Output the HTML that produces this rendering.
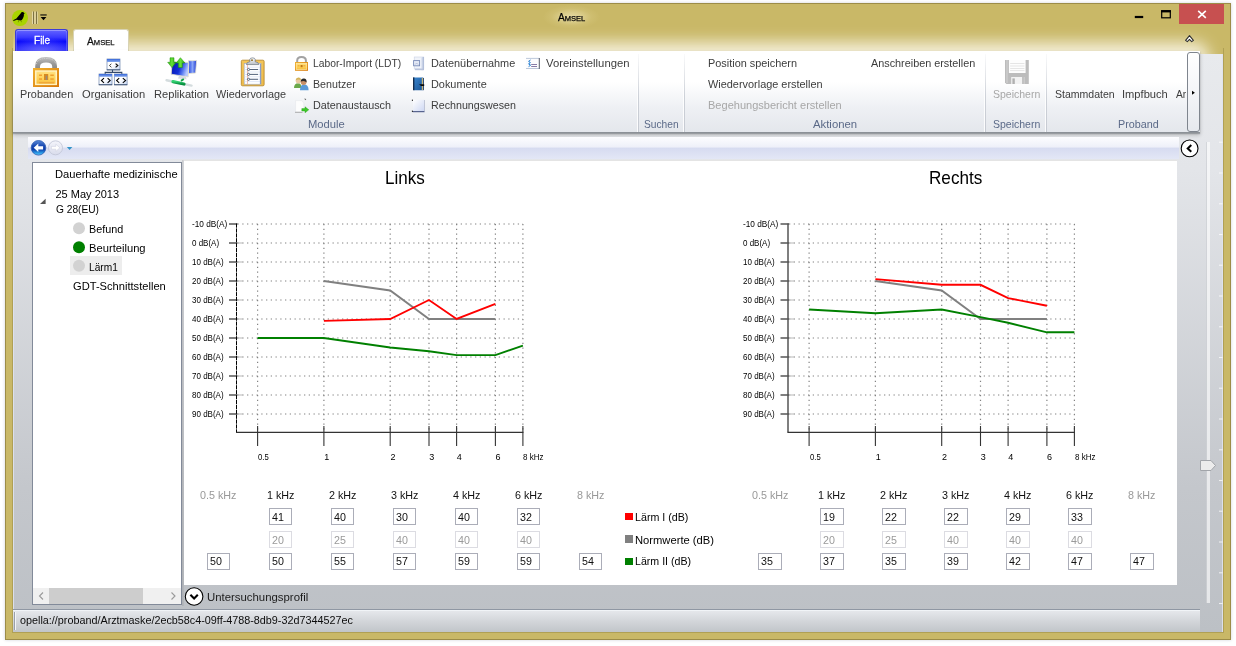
<!DOCTYPE html>
<html lang="de"><head><meta charset="utf-8"><title>Amsel</title>
<style>
html,body{margin:0;padding:0;}
body{width:1236px;height:646px;background:#fff;position:relative;overflow:hidden;font-family:"Liberation Sans",sans-serif;}
div,span,svg{position:absolute;box-sizing:border-box;}
.t{white-space:nowrap;line-height:16px;height:16px;transform-origin:0 50%;}
#win{left:5px;top:3px;width:1226px;height:637px;background:#c9b867;border:1px solid #9c8c48;box-shadow:0 0 3px rgba(40,50,90,.22);}
#glowc{left:13px;top:4px;width:1210px;height:50px;overflow:hidden;}
#glow{left:10px;top:47px;width:1177px;height:60px;border-radius:0 6px 0 0;background:#f5f1de;box-shadow:0 0 15px 9px rgba(245,240,218,.98);}
#client{left:13px;top:54px;width:1210px;height:578px;box-shadow:inset 1px 0 0 rgba(222,226,238,.9),inset -1px 0 0 rgba(222,226,238,.9);background:linear-gradient(to bottom,#e8eaed 0%,#e3e5e9 20%,#c4c7cc 75%,#bcc0c5 100%);}
#ribbon{left:13px;top:51px;width:1187px;height:82px;background:linear-gradient(to bottom,#ffffff 0%,#ffffff 38%,#eef0f4 70%,#e4e7ec 100%);border-bottom:1px solid #8c9197;box-shadow:0 1px 1px rgba(120,125,132,.55),0 2px 4px rgba(0,0,0,.22);}
.sep{width:1px;top:54px;height:78px;background:linear-gradient(to bottom,rgba(200,204,212,.1),#cdd1d8 55%,#c6cad2);box-shadow:-1px 0 0 rgba(255,255,255,.85);}
#nav{left:28px;top:137px;width:1151px;height:22px;background:linear-gradient(to bottom,#fdfdff 0%,#eef0f9 46%,#d6dbf0 50%,#e3e7f6 100%);}
#tree{left:32px;top:162px;width:150px;height:443px;background:#fff;border:1px solid #828a99;}
#content{left:184px;top:160px;width:992.5px;height:425px;background:#fff;}
#status{left:13px;top:609px;width:1187px;height:23px;background:linear-gradient(to bottom,#e7e9ed 0%,#d3d6da 50%,#c1c5c9 100%);border-top:1px solid #8f97a3;box-shadow:inset 0 1px 0 #f1f4f7;}
.box{width:23px;height:17px;border:1px solid #abadb8;background:#fff;}
.box.d{border-color:#dcdce2;}
#txt{left:0;top:0;width:1236px;height:646px;will-change:transform;}
#inb{left:12px;top:48px;width:1212px;height:585px;border:1px solid #b0a054;border-top:none;}

</style></head>
<body>
<div id="win"></div>
<div id="glowc"><div id="glow"></div></div>
<div id="inb"></div>
<div id="client"></div>
<div style="left:543px;top:5px;width:57px;height:24px;background:radial-gradient(ellipse 50% 50% at 50% 50%,rgba(236,226,176,.8) 0%,rgba(232,221,166,.6) 35%,rgba(222,208,140,.25) 70%,rgba(201,184,103,0) 100%);"></div>
<!-- window buttons -->
<div id="close" style="left:1179px;top:4px;width:45px;height:20px;background:#c75050;"></div>
<svg style="left:1128px;top:4px" width="100" height="20" viewBox="0 0 100 20">
 <rect x="6.800" y="11.900" width="8.400" height="2.200" fill="#000"/>
 <rect x="33.7" y="6.8" width="8.6" height="7" fill="none" stroke="#000" stroke-width="1.2"/><rect x="33.1" y="6.2" width="9.8" height="2.2" fill="#000"/>
 <path d="M70.2 6.8 L77.8 13.8 M77.8 6.8 L70.2 13.8" stroke="#fff" stroke-width="1.650" fill="none"/>
</svg>
<!-- quick access -->
<svg id="appicon" style="left:10px;top:8px" width="40" height="20" viewBox="0 0 40 20">
 <circle cx="10" cy="10" r="8" fill="#a9d400"/>
 <path d="M3.100 12.300 L6.400 10.400 L10.600 5.400 Q11.400 4 12.600 4.100 Q13.800 4.300 14 5.100 L14.900 5.500 L13.900 6 Q14.200 8.600 13 10.300 Q12 12.400 10.400 12.600 L6.800 11.800 L3.600 12.900 Z" fill="#000"/>
 <path d="M8.600 12.200 L8.300 14.300 M11 12.500 L11.500 14.200" stroke="#4a5a00" stroke-width=".5" fill="none"/>
 <rect x="23" y="3.500" width="1" height="12.500" fill="#7d7240"/><rect x="22.100" y="3.500" width=".9" height="12.500" fill="#e6dcae"/><rect x="24" y="3.500" width="2" height="12.500" fill="#dccf98"/>
 <rect x="26" y="3.500" width="1" height="12.500" fill="#7d7240"/><rect x="27" y="3.500" width=".8" height="12.500" fill="#e0d6a6"/>
 <rect x="30.3" y="6.2" width="6.4" height="1.5" fill="#3a3520"/>
 <path d="M30.6 9 L36.4 9 L33.5 12.2 Z" fill="#000"/>
</svg>
<!-- tabs -->
<div id="filetab" style="left:15px;top:29px;width:53px;height:22px;border-radius:3px 3px 0 0;background:radial-gradient(ellipse 70% 70% at 50% 105%,rgba(110,110,255,.9) 0%,rgba(60,60,255,0) 100%),linear-gradient(to bottom,#6464ff 0%,#3a3aff 35%,#0606fa 56%,#2c2cff 100%);border:1px solid #3c3cd6;border-bottom:none;box-shadow:inset 0 1px 0 rgba(160,160,255,.8),inset 1px 0 0 rgba(120,120,255,.5),inset -1px 0 0 rgba(120,120,255,.5);"></div>
<div id="amseltab" style="left:73px;top:29px;width:55.5px;height:23px;border-radius:3px 3px 0 0;background:#fff;border:1px solid #d8d3b4;border-bottom:none;"></div>
<!-- ribbon -->
<div id="ribbon"></div>
<div style="left:73.5px;top:50px;width:54.5px;height:2px;background:#fff;"></div>
<div class="sep" style="left:638px"></div>
<div class="sep" style="left:684px"></div>
<div class="sep" style="left:985px"></div>
<div class="sep" style="left:1046px"></div>
<!-- ribbon scroll button -->
<div style="left:1187px;top:52px;width:13px;height:80px;border:1px solid #7f858e;border-radius:3px;background:linear-gradient(to bottom,#fff,#f4f5f8 50%,#e6e9ee);"></div>
<svg style="left:1188px;top:86px" width="12" height="12" viewBox="0 0 12 12"><path d="M4 4.700 L6.900 6.700 L4 8.700 Z" fill="#000" stroke="#fff" stroke-width=".5" paint-order="stroke"/></svg>
<!-- ribbon minimise chevron -->
<svg style="left:1183px;top:32px" width="14" height="14" viewBox="0 0 14 14"><path d="M2.600 8.400 L6.500 3.700 L10.400 8.400 L8.700 9.600 L6.500 7.400 L4.300 9.600 Z" fill="#fff" stroke="#2e2e2e" stroke-width="1.100" stroke-linejoin="round"/></svg>
<svg id="icons" style="left:0;top:0" width="1236" height="140" viewBox="0 0 1236 140">
<defs>
 <linearGradient id="lkb" x1="0" y1="0" x2="1" y2="1"><stop offset="0" stop-color="#f0b030"/><stop offset="1" stop-color="#d87808"/></linearGradient>
 <linearGradient id="lkf" x1="0" y1="0" x2="0" y2="1"><stop offset="0" stop-color="#ffe080"/><stop offset=".6" stop-color="#ffd257"/><stop offset="1" stop-color="#f6bc3c"/></linearGradient>
 <linearGradient id="shk" x1="0" y1="0" x2="0" y2="1"><stop offset="0" stop-color="#c2c2c2"/><stop offset=".5" stop-color="#9c9c9c"/><stop offset="1" stop-color="#8a8a8a"/></linearGradient>
 <linearGradient id="obt" x1="0" y1="0" x2="0" y2="1"><stop offset="0" stop-color="#3868d8"/><stop offset="1" stop-color="#86a8ec"/></linearGradient>
 <linearGradient id="obb" x1="0" y1="0" x2="1" y2="1"><stop offset="0" stop-color="#ffffff"/><stop offset=".5" stop-color="#ffffff"/><stop offset="1" stop-color="#c8d8f4"/></linearGradient>
 <linearGradient id="mon" x1="0" y1="0" x2="1" y2=".3"><stop offset="0" stop-color="#0612ac"/><stop offset=".55" stop-color="#1430d8"/><stop offset=".78" stop-color="#5a7cf0"/><stop offset="1" stop-color="#b4c6ff"/></linearGradient>
 <linearGradient id="mon2" x1="0" y1="0" x2="1" y2="0"><stop offset="0" stop-color="#2848e0"/><stop offset=".5" stop-color="#88a4f8"/><stop offset="1" stop-color="#1c38d0"/></linearGradient>
 <linearGradient id="grn" x1="0" y1="0" x2="1" y2="0"><stop offset="0" stop-color="#2cb810"/><stop offset=".5" stop-color="#66e038"/><stop offset="1" stop-color="#22a008"/></linearGradient>
 <linearGradient id="cab" x1="0" y1="0" x2="0" y2="1"><stop offset="0" stop-color="#30d070"/><stop offset="1" stop-color="#089040"/></linearGradient>
 <linearGradient id="brd" x1="0" y1="0" x2="0" y2="1"><stop offset="0" stop-color="#f4c558"/><stop offset="1" stop-color="#eebb48"/></linearGradient>
 <linearGradient id="clp" x1="0" y1="0" x2="0" y2="1"><stop offset="0" stop-color="#ffffff"/><stop offset="1" stop-color="#b8bec6"/></linearGradient>
 <linearGradient id="bk2" x1="0" y1="0" x2="1" y2="1"><stop offset="0" stop-color="#3a86d0"/><stop offset="1" stop-color="#1a5494"/></linearGradient>
 <linearGradient id="pg" x1="0" y1="0" x2="1" y2="1"><stop offset="0" stop-color="#ffffff"/><stop offset="1" stop-color="#ccd6f2"/></linearGradient>
 <linearGradient id="dtu" x1="0" y1="0" x2="1" y2="0"><stop offset="0" stop-color="#e8edf8"/><stop offset="1" stop-color="#a8b6d4"/></linearGradient>
</defs>
<!-- Probanden: big lock -->
<g>
 <path d="M35.2 69 L35.2 66 Q35.2 57 46 57 Q57 57 57 66 L57 69 L52.2 69 L52.2 66.500 Q52.2 62.600 46 62.600 Q40 62.600 40 66.500 L40 69 Z" fill="url(#shk)"/>
 <path d="M36.5 64 Q37.5 58.500 46 58.500 Q54.500 58.500 55.700 64" fill="none" stroke="#d4d4d4" stroke-width="1" stroke-dasharray="1 1"/>
 <rect x="33" y="68" width="26" height="19" fill="url(#lkb)"/>
 <rect x="35" y="70.300" width="22" height="14.800" fill="#fff2c0"/>
 <rect x="36.500" y="71.700" width="19" height="12" fill="url(#lkf)"/>
 <rect x="44" y="74" width="4.200" height="6" fill="#d88a20"/><rect x="45.700" y="75.600" width="1.600" height="4.400" fill="#9a8a78"/>
 <rect x="39" y="74.500" width="3" height="1.500" fill="#efa030"/><rect x="39" y="78.300" width="3" height="1.500" fill="#efa030"/>
 <rect x="50.300" y="74.500" width="3.500" height="1.500" fill="#efa030"/><rect x="50.300" y="78.300" width="3.500" height="1.500" fill="#efa030"/>
 <rect x="39" y="82" width="15" height="1.400" fill="#f0a838"/>
</g>
<!-- Organisation -->
<g>
 <path d="M112.500 69.500 L112.500 72.400 M105.200 74.500 L105.200 72.400 L121.800 72.400 L121.800 74.500" fill="none" stroke="#34496a" stroke-width="1.100"/>
 <g id="obx"><rect x="107" y="59" width="13" height="10.800" fill="url(#obb)" stroke="#6c84ac" stroke-width=".7"/><rect x="107" y="59" width="13" height="3" fill="url(#obt)"/></g>
 <path d="M111.400 63.800 L109.400 65.500 L111.400 67.200" fill="none" stroke="#333" stroke-width=".9"/><path d="M115.600 63.600 L117.800 65.500 L115.600 67.400" fill="none" stroke="#111" stroke-width="1.200"/>
 <rect x="99" y="74" width="13" height="10.700" fill="url(#obb)" stroke="#6c84ac" stroke-width=".7"/><rect x="99" y="74" width="13" height="2.800" fill="url(#obt)"/>
 <rect x="114.300" y="74" width="12.800" height="10.700" fill="url(#obb)" stroke="#6c84ac" stroke-width=".7"/><rect x="114.300" y="74" width="12.800" height="2.800" fill="url(#obt)"/>
 <path d="M104 78.200 L101.400 80.500 L104 82.800 M107.600 78.200 L110.200 80.500 L107.600 82.800 M119.200 78.200 L116.600 80.500 L119.200 82.800 M122.800 78.200 L125.600 80.500 L122.800 82.800" fill="none" stroke="#000" stroke-width="1.050"/>
 <path d="M106.800 69.900 L120.200 69.900 M98.800 84.800 L112.200 84.800 M114.100 84.800 L127.300 84.800" stroke="#34496a" stroke-width=".9"/>
</g>
<!-- Replikation -->
<g>
 <path d="M188.400 60.800 L196.600 60.500 L195.600 73 L188.400 73.600 Z" fill="url(#mon2)" stroke="#e8e4d0" stroke-width=".8"/>
 <path d="M172.200 61.800 L188.800 62.500 L188.200 77 L171.200 74.200 Z" fill="url(#mon)" stroke="#e6e2cc" stroke-width=".8"/>
 <path d="M179 75.800 L186 77 L186.600 79.200 L178 78.600 Z" fill="#c8ccd4" opacity=".7"/>
 <path d="M170 57.800 L174 57.800 L174 62.300 L176.200 62.300 L172 67.600 L167.700 62.300 L170 62.300 Z" fill="url(#grn)" stroke="#1c9008" stroke-width=".5"/>
 <path d="M178.300 67.500 L182.400 67.500 L182.400 63 L185 63 L180.400 57.700 L176.200 63 L178.300 63 Z" fill="url(#grn)" stroke="#1c9008" stroke-width=".5"/>
 <path d="M166.600 80.300 L191.500 85.600" stroke="#d4dcde" stroke-width="2.500" stroke-linecap="round"/>
 <path d="M173 81.600 L184 84" stroke="url(#cab)" stroke-width="3.300" stroke-linecap="round"/>
 <path d="M181 80.800 L183.800 79" stroke="#10a048" stroke-width="2"/>
</g>
<!-- Wiedervorlage: clipboard -->
<g>
 <rect x="241.300" y="60.200" width="22.800" height="25.600" rx="1.200" fill="url(#brd)" stroke="#b88a30" stroke-width=".9"/>
 <rect x="244.200" y="63.400" width="16.800" height="20.800" fill="#fff" stroke="#9aa8c4" stroke-width=".6"/>
 <g stroke="#d4dff4" stroke-width=".7"><line x1="244.500" y1="67.200" x2="260.700" y2="67.200"/><line x1="244.500" y1="69.600" x2="260.700" y2="69.600"/><line x1="244.500" y1="72" x2="260.700" y2="72"/><line x1="244.500" y1="74.400" x2="260.700" y2="74.400"/><line x1="244.500" y1="76.800" x2="260.700" y2="76.800"/><line x1="244.500" y1="79.200" x2="260.700" y2="79.200"/><line x1="244.500" y1="81.600" x2="260.700" y2="81.600"/></g>
 <line x1="247.500" y1="64" x2="247.500" y2="84" stroke="#f0a890" stroke-width=".7"/>
 <line x1="260.400" y1="64" x2="260.400" y2="84" stroke="#5a74b0" stroke-width=".7"/>
 <g stroke="#56657c" stroke-width="1" fill="#fff"><line x1="249.500" y1="69.500" x2="258" y2="69.500"/><line x1="249.500" y1="74.400" x2="258" y2="74.400"/><line x1="249.500" y1="79.300" x2="258" y2="79.300"/><circle cx="248.500" cy="69.500" r="1.100"/><circle cx="248.500" cy="74.400" r="1.100"/><circle cx="248.500" cy="79.300" r="1.100"/></g>
 <path d="M246.400 64.600 Q246.400 62 249.800 61.800 L249.800 59.400 Q250 57.900 252.600 57.900 Q255 57.900 255.200 59.400 L255.200 61.800 Q258.800 62 258.800 64.600 Z" fill="url(#clp)" stroke="#6c747e" stroke-width=".7"/>
 <circle cx="252" cy="60.200" r=".9" fill="#8a6a20"/>
</g>
<!-- small lock -->
<g>
 <path d="M297.200 62.500 L297.200 60.500 Q297.200 57 301.500 57 Q305.900 57 305.900 60.500 L305.900 62.500" fill="none" stroke="#a2a2a2" stroke-width="2"/>
 <rect x="295" y="62" width="13" height="8.800" fill="url(#lkb)"/>
 <rect x="296.200" y="63.300" width="10.600" height="6.200" fill="url(#lkf)" stroke="#fff0b8" stroke-width=".6"/>
 <rect x="300.600" y="65" width="2" height="2.200" fill="#c07818"/><rect x="297.600" y="65.400" width="2" height=".9" fill="#e89828"/><rect x="303.400" y="65.400" width="2" height=".9" fill="#e89828"/>
</g>
<!-- Benutzer -->
<g>
 <path d="M294 88 Q294 83.200 298.200 83.200 Q301.500 83.200 301.500 88 Z" fill="#6aa84a"/>
 <circle cx="298.300" cy="80.800" r="2.600" fill="#e8c8a0"/><path d="M295.600 80.200 Q296 77.400 298.600 77.600 Q301 77.600 301 80 Q298.400 78.800 295.600 80.200Z" fill="#d4b458"/>
 <path d="M300 90.200 Q300 84.600 304.200 84.600 Q308.600 84.600 308.600 90.200 Z" fill="#5a9ad8"/>
 <circle cx="303.600" cy="82" r="2.900" fill="#c89068"/><path d="M300.700 81.600 Q301 78.400 304 78.600 Q306.800 78.800 306.600 82.600 Q304.800 80 300.700 81.600Z" fill="#2a2a2a"/>
</g>
<!-- Datenaustausch -->
<g>
 <path d="M295.600 100.600 L301.600 100.600 L303.800 103 L303.800 112 L295.600 112 Z" fill="#fdfdfd" stroke="#e2e4e8" stroke-width=".5"/>
 <line x1="295" y1="112.300" x2="302.500" y2="112.300" stroke="#a4a4a4" stroke-width=".9"/>
 <path d="M304.300 98.500 L306.300 98.900 L305.200 100.300 Z" fill="#555"/>
 <path d="M301.800 108.600 L305 108.600 L305 106.800 L308.800 109.800 L305 112.800 L305 111 L301.800 111 Z" fill="#3cc828" stroke="#28a018" stroke-width=".4"/>
</g>
<!-- Datenübernahme -->
<g>
 <rect x="414.200" y="57" width="9.600" height="12" fill="#f0f3fa" stroke="#cad2e4" stroke-width=".6"/>
 <rect x="421" y="57" width="3" height="13.200" fill="url(#dtu)"/>
 <rect x="413.600" y="60.600" width="6" height="5.200" fill="#e4e9f6" stroke="#7a8cb8" stroke-width=".9"/>
 <path d="M415 64.600 L416.600 63 L418.200 64.600" fill="none" stroke="#9aa8c8" stroke-width=".6"/>
 <rect x="415" y="68.600" width="8" height="1.600" fill="#bac4dc"/>
</g>
<!-- Dokumente -->
<g>
 <rect x="413" y="77.400" width="10.600" height="12.800" rx=".8" fill="url(#bk2)"/>
 <rect x="413" y="77.400" width="1.400" height="12.800" fill="#142c4c"/>
 <rect x="421.800" y="78" width="1.400" height="12" fill="#c8b478"/>
 <rect x="423.200" y="78" width=".8" height="12.200" fill="#1c3c68"/>
 <path d="M419 84.200 L424.200 84.200 L424.200 86 L421 86 Z" fill="#0a0a0a"/>
</g>
<!-- Rechnungswesen -->
<g>
 <rect x="413" y="99.800" width="11.600" height="11.800" fill="url(#pg)"/>
 <line x1="412.600" y1="111.700" x2="424.600" y2="111.700" stroke="#26346a" stroke-width=".9"/>
 <line x1="424.500" y1="100" x2="424.500" y2="111.600" stroke="#b0b6c8" stroke-width=".7"/>
 <line x1="412.400" y1="99.600" x2="412.400" y2="112" stroke="#111" stroke-width=".9" stroke-dasharray="1.400 9.600"/>
</g>
<!-- Voreinstellungen -->
<g>
 <rect x="526" y="58.600" width="13" height="9.800" fill="#fcfcfd"/>
 <line x1="526" y1="58.400" x2="539.400" y2="58.400" stroke="#b6c2d6" stroke-width=".9"/><line x1="526" y1="68.500" x2="539.400" y2="68.500" stroke="#b6c2d6" stroke-width=".9"/>
 <line x1="539.300" y1="58" x2="539.300" y2="69" stroke="#565c6a" stroke-width="1"/>
 <path d="M530.500 60 L528.600 61.400 L530.400 62.600 L528.600 63.800 L530.600 65.200 L528.600 66.600" fill="none" stroke="#1878d0" stroke-width="1"/>
 <line x1="531.200" y1="64.500" x2="537" y2="64.500" stroke="#7a6c9c" stroke-width=".9"/><line x1="531.200" y1="66.500" x2="537" y2="66.500" stroke="#7a6c9c" stroke-width=".9"/>
</g>
<!-- Speichern floppy (disabled) -->
<g>
 <path d="M1005 60 L1028.800 60 L1028.800 84 L1006.400 84 L1005 82.600 Z" fill="#bcbcbc"/>
 <rect x="1006" y="60" width="2" height="23" fill="#c8c8c8"/>
 <rect x="1008.900" y="60" width="16.700" height="13" fill="#fdfdfd"/>
 <g stroke="#dedede" stroke-width=".8"><line x1="1010.200" y1="63.500" x2="1024.400" y2="63.500"/><line x1="1010.200" y1="66" x2="1024.400" y2="66"/><line x1="1010.200" y1="68.500" x2="1024.400" y2="68.500"/><line x1="1010.200" y1="70.600" x2="1024.400" y2="70.600"/></g>
 <rect x="1011.200" y="77" width="13.600" height="7" fill="#f2f2f2"/>
 <rect x="1012.400" y="78.400" width="2.400" height="5.600" fill="#b0b0b0"/><rect x="1022" y="77" width="2.800" height="7" fill="#c2c2c2"/>
</g>
</svg>

<!-- nav -->
<div id="nav"></div>
<svg style="left:28px;top:137px" width="60" height="24" viewBox="0 0 60 24">
 <defs><linearGradient id="bk" x1="0" y1="0" x2="0" y2="1"><stop offset="0" stop-color="#5a8ad8"/><stop offset=".35" stop-color="#1c4cb4"/><stop offset=".6" stop-color="#0a3aa8"/><stop offset=".85" stop-color="#2a9ce8"/><stop offset="1" stop-color="#58c8f8"/></linearGradient>
 <linearGradient id="fw" x1="0" y1="0" x2="0" y2="1"><stop offset="0" stop-color="#f4f5fb"/><stop offset="1" stop-color="#d9dcec"/></linearGradient></defs>
 <circle cx="10.500" cy="10.800" r="7.300" fill="url(#bk)" stroke="#2858b0" stroke-width=".8"/>
 <path d="M5.700 10.800 L10.300 6.500 L10.300 9.200 L15.100 9.200 L15.100 12.400 L10.300 12.400 L10.300 15.100 Z" fill="#fff"/>
 <circle cx="27.500" cy="10.800" r="7" fill="url(#fw)" stroke="#c3c7d8" stroke-width=".9"/>
 <path d="M31.800 10.800 L27.800 7.100 L27.800 9.400 L23.400 9.400 L23.400 12.200 L27.800 12.200 L27.800 14.500 Z" fill="#fff" stroke="#cfd2e0" stroke-width=".6"/>
 <path d="M38.800 10 L44.400 10 L41.600 13 Z" fill="#2f93c8"/>
</svg>
<!-- collapse button right -->
<svg style="left:1179px;top:138px" width="22" height="22" viewBox="0 0 22 22"><circle cx="10.6" cy="10.4" r="8.4" fill="#fff" stroke="#000" stroke-width="1.1"/><path d="M12.300 7 L8.700 10.400 L12.300 13.800" fill="none" stroke="#000" stroke-width="2"/></svg>
<!-- right slider -->
<div style="left:1206px;top:142px;width:4px;height:461px;background:rgba(255,255,255,.62);border-left:1px solid rgba(150,155,162,.35);"></div>
<svg style="left:1198px;top:140px" width="26" height="470" viewBox="0 0 26 470">
 <g stroke="rgba(255,255,255,.72)" stroke-width="1.1">
 <line x1="21" y1="463.5" x2="24.6" y2="463.5"/><line x1="21" y1="432.8" x2="24.6" y2="432.8"/><line x1="21" y1="402.0" x2="24.6" y2="402.0"/><line x1="21" y1="371.2" x2="24.6" y2="371.2"/><line x1="21" y1="340.5" x2="24.6" y2="340.5"/><line x1="21" y1="309.8" x2="24.6" y2="309.8"/><line x1="21" y1="279.0" x2="24.6" y2="279.0"/><line x1="21" y1="248.2" x2="24.6" y2="248.2"/><line x1="21" y1="217.5" x2="24.6" y2="217.5"/><line x1="21" y1="186.8" x2="24.6" y2="186.8"/><line x1="21" y1="156.0" x2="24.6" y2="156.0"/><line x1="21" y1="125.2" x2="24.6" y2="125.2"/><line x1="21" y1="94.5" x2="24.6" y2="94.5"/><line x1="21" y1="63.8" x2="24.6" y2="63.8"/><line x1="21" y1="33.0" x2="24.6" y2="33.0"/><line x1="21" y1="2.2" x2="24.6" y2="2.2"/>
 </g>
 <path d="M2.5 320.500 L13 320.500 L17.500 325.500 L13 330.500 L2.5 330.500 Z" fill="#ececec" stroke="#a2a5aa" stroke-width="1"/>
</svg>
<!-- tree -->
<div style="left:182px;top:160px;width:2px;height:446px;background:linear-gradient(to right,rgba(120,122,126,.28),rgba(120,122,126,.12));"></div>
<div id="tree"></div>
<div style="left:70px;top:256px;width:52px;height:19px;background:#ededed;"></div>
<svg style="left:32px;top:162px" width="150" height="130" viewBox="0 0 150 130">
 <path d="M13.600 36.800 L13.600 42 L8 42 Z" fill="#555"/>
 <circle cx="47" cy="66.300" r="6" fill="#d2d2d2"/>
 <circle cx="47" cy="85.200" r="6" fill="#008000"/>
 <circle cx="47" cy="103.800" r="6" fill="#d2d2d2"/>
</svg>
<!-- tree scrollbar -->
<div style="left:33px;top:588px;width:148px;height:16px;background:#f0f0f0;"></div>
<div style="left:49px;top:588px;width:94px;height:16px;background:#cdcdcd;"></div>
<svg style="left:33px;top:588px" width="148" height="16" viewBox="0 0 148 16"><path d="M10 4.500 L6.500 8 L10 11.500 M138.500 4.500 L142 8 L138.500 11.500" fill="none" stroke="#9a9a9a" stroke-width="1.100"/></svg>
<!-- content -->
<div id="content"></div>
<div style="left:184px;top:160px;width:992.5px;height:1px;background:#e4e4e4;"></div>
<svg id="charts" style="left:0;top:0" width="1236" height="646" viewBox="0 0 1236 646"><style>.g{stroke:#828282;stroke-width:1.2;stroke-dasharray:1.3 3.45;}</style>
<line x1="237.5" y1="224.0" x2="522.9" y2="224.0" class="g"/>
<line x1="237.5" y1="243.0" x2="522.9" y2="243.0" class="g"/>
<line x1="237.5" y1="262.0" x2="522.9" y2="262.0" class="g"/>
<line x1="237.5" y1="281.0" x2="522.9" y2="281.0" class="g"/>
<line x1="237.5" y1="300.0" x2="522.9" y2="300.0" class="g"/>
<line x1="237.5" y1="319.0" x2="522.9" y2="319.0" class="g"/>
<line x1="237.5" y1="338.0" x2="522.9" y2="338.0" class="g"/>
<line x1="237.5" y1="357.0" x2="522.9" y2="357.0" class="g"/>
<line x1="237.5" y1="376.0" x2="522.9" y2="376.0" class="g"/>
<line x1="237.5" y1="395.0" x2="522.9" y2="395.0" class="g"/>
<line x1="237.5" y1="414.0" x2="522.9" y2="414.0" class="g"/>
<line x1="257.6" y1="224" x2="257.6" y2="432" class="g"/>
<line x1="323.9" y1="224" x2="323.9" y2="432" class="g"/>
<line x1="390.2" y1="224" x2="390.2" y2="432" class="g"/>
<line x1="429.0" y1="224" x2="429.0" y2="432" class="g"/>
<line x1="456.6" y1="224" x2="456.6" y2="432" class="g"/>
<line x1="495.4" y1="224" x2="495.4" y2="432" class="g"/>
<line x1="522.9" y1="224" x2="522.9" y2="432" class="g"/>
<line x1="229.0" y1="224.0" x2="237.5" y2="224.0" stroke="#4a4a4a" stroke-width="1.4"/>
<line x1="229.0" y1="243.0" x2="237.5" y2="243.0" stroke="#4a4a4a" stroke-width="1.4"/>
<line x1="237.5" y1="243.0" x2="243.0" y2="243.0" stroke="#c4c4c4" stroke-width="1.2"/>
<line x1="229.0" y1="262.0" x2="237.5" y2="262.0" stroke="#4a4a4a" stroke-width="1.4"/>
<line x1="237.5" y1="262.0" x2="243.0" y2="262.0" stroke="#c4c4c4" stroke-width="1.2"/>
<line x1="229.0" y1="281.0" x2="237.5" y2="281.0" stroke="#4a4a4a" stroke-width="1.4"/>
<line x1="237.5" y1="281.0" x2="243.0" y2="281.0" stroke="#c4c4c4" stroke-width="1.2"/>
<line x1="229.0" y1="300.0" x2="237.5" y2="300.0" stroke="#4a4a4a" stroke-width="1.4"/>
<line x1="237.5" y1="300.0" x2="243.0" y2="300.0" stroke="#c4c4c4" stroke-width="1.2"/>
<line x1="229.0" y1="319.0" x2="237.5" y2="319.0" stroke="#4a4a4a" stroke-width="1.4"/>
<line x1="237.5" y1="319.0" x2="243.0" y2="319.0" stroke="#c4c4c4" stroke-width="1.2"/>
<line x1="229.0" y1="338.0" x2="237.5" y2="338.0" stroke="#4a4a4a" stroke-width="1.4"/>
<line x1="237.5" y1="338.0" x2="243.0" y2="338.0" stroke="#c4c4c4" stroke-width="1.2"/>
<line x1="229.0" y1="357.0" x2="237.5" y2="357.0" stroke="#4a4a4a" stroke-width="1.4"/>
<line x1="237.5" y1="357.0" x2="243.0" y2="357.0" stroke="#c4c4c4" stroke-width="1.2"/>
<line x1="229.0" y1="376.0" x2="237.5" y2="376.0" stroke="#4a4a4a" stroke-width="1.4"/>
<line x1="237.5" y1="376.0" x2="243.0" y2="376.0" stroke="#c4c4c4" stroke-width="1.2"/>
<line x1="229.0" y1="395.0" x2="237.5" y2="395.0" stroke="#4a4a4a" stroke-width="1.4"/>
<line x1="237.5" y1="395.0" x2="243.0" y2="395.0" stroke="#c4c4c4" stroke-width="1.2"/>
<line x1="229.0" y1="414.0" x2="237.5" y2="414.0" stroke="#4a4a4a" stroke-width="1.4"/>
<line x1="237.5" y1="414.0" x2="243.0" y2="414.0" stroke="#c4c4c4" stroke-width="1.2"/>
<line x1="236.5" y1="223.5" x2="236.5" y2="432.5" stroke="#000" stroke-width="1" stroke-dasharray="4.2 .7"/>
<line x1="236.0" y1="432.3" x2="523.4" y2="432.3" stroke="#333" stroke-width="1.2"/>
<line x1="257.6" y1="426" x2="257.6" y2="446" stroke="#333" stroke-width="1.1"/>
<line x1="323.9" y1="426" x2="323.9" y2="446" stroke="#333" stroke-width="1.1"/>
<line x1="390.2" y1="426" x2="390.2" y2="446" stroke="#333" stroke-width="1.1"/>
<line x1="429.0" y1="426" x2="429.0" y2="446" stroke="#333" stroke-width="1.1"/>
<line x1="456.6" y1="426" x2="456.6" y2="446" stroke="#333" stroke-width="1.1"/>
<line x1="495.4" y1="426" x2="495.4" y2="446" stroke="#333" stroke-width="1.1"/>
<line x1="522.9" y1="426" x2="522.9" y2="446" stroke="#333" stroke-width="1.1"/>
<polyline points="323.9,281.0 390.2,290.5 429.0,319.0 456.6,319.0 495.4,319.0" fill="none" stroke="#808080" stroke-width="1.9" stroke-linejoin="miter"/>
<polyline points="323.9,320.9 390.2,319.0 429.0,300.0 456.6,319.0 495.4,303.8" fill="none" stroke="#ff0000" stroke-width="1.9" stroke-linejoin="miter"/>
<polyline points="257.6,338.0 323.9,338.0 390.2,347.5 429.0,351.3 456.6,355.1 495.4,355.1 522.9,345.6" fill="none" stroke="#008000" stroke-width="1.9" stroke-linejoin="miter"/>
<line x1="789.0" y1="224.0" x2="1074.4" y2="224.0" class="g"/>
<line x1="789.0" y1="243.0" x2="1074.4" y2="243.0" class="g"/>
<line x1="789.0" y1="262.0" x2="1074.4" y2="262.0" class="g"/>
<line x1="789.0" y1="281.0" x2="1074.4" y2="281.0" class="g"/>
<line x1="789.0" y1="300.0" x2="1074.4" y2="300.0" class="g"/>
<line x1="789.0" y1="319.0" x2="1074.4" y2="319.0" class="g"/>
<line x1="789.0" y1="338.0" x2="1074.4" y2="338.0" class="g"/>
<line x1="789.0" y1="357.0" x2="1074.4" y2="357.0" class="g"/>
<line x1="789.0" y1="376.0" x2="1074.4" y2="376.0" class="g"/>
<line x1="789.0" y1="395.0" x2="1074.4" y2="395.0" class="g"/>
<line x1="789.0" y1="414.0" x2="1074.4" y2="414.0" class="g"/>
<line x1="809.1" y1="224" x2="809.1" y2="432" class="g"/>
<line x1="875.4" y1="224" x2="875.4" y2="432" class="g"/>
<line x1="941.7" y1="224" x2="941.7" y2="432" class="g"/>
<line x1="980.5" y1="224" x2="980.5" y2="432" class="g"/>
<line x1="1008.1" y1="224" x2="1008.1" y2="432" class="g"/>
<line x1="1046.9" y1="224" x2="1046.9" y2="432" class="g"/>
<line x1="1074.4" y1="224" x2="1074.4" y2="432" class="g"/>
<line x1="780.5" y1="224.0" x2="789.0" y2="224.0" stroke="#4a4a4a" stroke-width="1.4"/>
<line x1="780.5" y1="243.0" x2="789.0" y2="243.0" stroke="#4a4a4a" stroke-width="1.4"/>
<line x1="789.0" y1="243.0" x2="794.5" y2="243.0" stroke="#c4c4c4" stroke-width="1.2"/>
<line x1="780.5" y1="262.0" x2="789.0" y2="262.0" stroke="#4a4a4a" stroke-width="1.4"/>
<line x1="789.0" y1="262.0" x2="794.5" y2="262.0" stroke="#c4c4c4" stroke-width="1.2"/>
<line x1="780.5" y1="281.0" x2="789.0" y2="281.0" stroke="#4a4a4a" stroke-width="1.4"/>
<line x1="789.0" y1="281.0" x2="794.5" y2="281.0" stroke="#c4c4c4" stroke-width="1.2"/>
<line x1="780.5" y1="300.0" x2="789.0" y2="300.0" stroke="#4a4a4a" stroke-width="1.4"/>
<line x1="789.0" y1="300.0" x2="794.5" y2="300.0" stroke="#c4c4c4" stroke-width="1.2"/>
<line x1="780.5" y1="319.0" x2="789.0" y2="319.0" stroke="#4a4a4a" stroke-width="1.4"/>
<line x1="789.0" y1="319.0" x2="794.5" y2="319.0" stroke="#c4c4c4" stroke-width="1.2"/>
<line x1="780.5" y1="338.0" x2="789.0" y2="338.0" stroke="#4a4a4a" stroke-width="1.4"/>
<line x1="789.0" y1="338.0" x2="794.5" y2="338.0" stroke="#c4c4c4" stroke-width="1.2"/>
<line x1="780.5" y1="357.0" x2="789.0" y2="357.0" stroke="#4a4a4a" stroke-width="1.4"/>
<line x1="789.0" y1="357.0" x2="794.5" y2="357.0" stroke="#c4c4c4" stroke-width="1.2"/>
<line x1="780.5" y1="376.0" x2="789.0" y2="376.0" stroke="#4a4a4a" stroke-width="1.4"/>
<line x1="789.0" y1="376.0" x2="794.5" y2="376.0" stroke="#c4c4c4" stroke-width="1.2"/>
<line x1="780.5" y1="395.0" x2="789.0" y2="395.0" stroke="#4a4a4a" stroke-width="1.4"/>
<line x1="789.0" y1="395.0" x2="794.5" y2="395.0" stroke="#c4c4c4" stroke-width="1.2"/>
<line x1="780.5" y1="414.0" x2="789.0" y2="414.0" stroke="#4a4a4a" stroke-width="1.4"/>
<line x1="789.0" y1="414.0" x2="794.5" y2="414.0" stroke="#c4c4c4" stroke-width="1.2"/>
<line x1="788.0" y1="223.5" x2="788.0" y2="432.5" stroke="#555" stroke-width="1.5"/>
<line x1="787.5" y1="432.3" x2="1074.9" y2="432.3" stroke="#333" stroke-width="1.2"/>
<line x1="809.1" y1="426" x2="809.1" y2="446" stroke="#333" stroke-width="1.1"/>
<line x1="875.4" y1="426" x2="875.4" y2="446" stroke="#333" stroke-width="1.1"/>
<line x1="941.7" y1="426" x2="941.7" y2="446" stroke="#333" stroke-width="1.1"/>
<line x1="980.5" y1="426" x2="980.5" y2="446" stroke="#333" stroke-width="1.1"/>
<line x1="1008.1" y1="426" x2="1008.1" y2="446" stroke="#333" stroke-width="1.1"/>
<line x1="1046.9" y1="426" x2="1046.9" y2="446" stroke="#333" stroke-width="1.1"/>
<line x1="1074.4" y1="426" x2="1074.4" y2="446" stroke="#333" stroke-width="1.1"/>
<polyline points="875.4,281.0 941.7,290.5 980.5,319.0 1008.1,319.0 1046.9,319.0" fill="none" stroke="#808080" stroke-width="1.9" stroke-linejoin="miter"/>
<polyline points="875.4,279.1 941.7,284.8 980.5,284.8 1008.1,298.1 1046.9,305.7" fill="none" stroke="#ff0000" stroke-width="1.9" stroke-linejoin="miter"/>
<polyline points="809.1,309.5 875.4,313.3 941.7,309.5 980.5,317.1 1008.1,322.8 1046.9,332.3 1074.4,332.3" fill="none" stroke="#008000" stroke-width="1.9" stroke-linejoin="miter"/>
</svg>
<div class="box" style="left:269px;top:508px"></div>
<div class="box" style="left:331px;top:508px"></div>
<div class="box" style="left:393px;top:508px"></div>
<div class="box" style="left:455px;top:508px"></div>
<div class="box" style="left:517px;top:508px"></div>
<div class="box d" style="left:269px;top:531px"></div>
<div class="box d" style="left:331px;top:531px"></div>
<div class="box d" style="left:393px;top:531px"></div>
<div class="box d" style="left:455px;top:531px"></div>
<div class="box d" style="left:517px;top:531px"></div>
<div class="box" style="left:207px;top:553px"></div>
<div class="box" style="left:269px;top:553px"></div>
<div class="box" style="left:331px;top:553px"></div>
<div class="box" style="left:393px;top:553px"></div>
<div class="box" style="left:455px;top:553px"></div>
<div class="box" style="left:517px;top:553px"></div>
<div class="box" style="left:579px;top:553px"></div>
<div class="box" style="left:820px;top:508px;width:24px"></div>
<div class="box" style="left:882px;top:508px;width:24px"></div>
<div class="box" style="left:944px;top:508px;width:24px"></div>
<div class="box" style="left:1006px;top:508px;width:24px"></div>
<div class="box" style="left:1068px;top:508px;width:24px"></div>
<div class="box d" style="left:820px;top:531px;width:24px"></div>
<div class="box d" style="left:882px;top:531px;width:24px"></div>
<div class="box d" style="left:944px;top:531px;width:24px"></div>
<div class="box d" style="left:1006px;top:531px;width:24px"></div>
<div class="box d" style="left:1068px;top:531px;width:24px"></div>
<div class="box" style="left:758px;top:553px;width:24px"></div>
<div class="box" style="left:820px;top:553px;width:24px"></div>
<div class="box" style="left:882px;top:553px;width:24px"></div>
<div class="box" style="left:944px;top:553px;width:24px"></div>
<div class="box" style="left:1006px;top:553px;width:24px"></div>
<div class="box" style="left:1068px;top:553px;width:24px"></div>
<div class="box" style="left:1130px;top:553px;width:24px"></div>
<!-- legend squares -->
<div style="left:625px;top:513px;width:8px;height:7px;background:#ff0000;"></div>
<div style="left:625px;top:535px;width:8px;height:8px;background:#808080;"></div>
<div style="left:625px;top:558px;width:8px;height:7px;background:#008000;"></div>
<!-- expander -->
<svg style="left:184.400px;top:585.600px" width="22" height="22" viewBox="0 0 22 22"><circle cx="10.1" cy="10.5" r="8.8" fill="#fff" stroke="#000" stroke-width="1.1"/><path d="M6.400 8.700 L10.100 12.500 L13.800 8.700" fill="none" stroke="#000" stroke-width="2.100"/></svg>
<!-- status -->
<div id="status"></div>
<div style="left:14px;top:612px;width:1px;height:18px;background:#9aa0a8;"></div><div style="left:15px;top:612px;width:1px;height:18px;background:#f4f5f7;"></div>

<div id="txt">
<span class="t" style="left:557.90px;top:9.06px;font-size:10.8px;color:#000;transform:scaleX(0.9414);font-variant:small-caps;-webkit-text-stroke:.25px #000;">Amsel</span>
<span class="t" style="left:33.50px;top:32.39px;font-size:11px;color:#fff;transform:scaleX(0.9135);-webkit-text-stroke:.3px #fff;">File</span>
<span class="t" style="left:87.00px;top:32.96px;font-size:10.8px;color:#111;transform:scaleX(0.9483);font-variant:small-caps;-webkit-text-stroke:.25px #111;">Amsel</span>
<span class="t" style="left:20.40px;top:85.89px;font-size:11px;color:#3c3c3c;transform:scaleX(0.9883);">Probanden</span>
<span class="t" style="left:81.80px;top:85.89px;font-size:11px;color:#3c3c3c;transform:scaleX(1.0132);">Organisation</span>
<span class="t" style="left:153.60px;top:85.89px;font-size:11px;color:#3c3c3c;transform:scaleX(1.0106);">Replikation</span>
<span class="t" style="left:216.40px;top:85.89px;font-size:11px;color:#3c3c3c;transform:scaleX(0.9884);">Wiedervorlage</span>
<span class="t" style="left:313.30px;top:55.19px;font-size:11px;color:#3c3c3c;transform:scaleX(0.9369);">Labor-Import (LDT)</span>
<span class="t" style="left:313.30px;top:76.19px;font-size:11px;color:#3c3c3c;transform:scaleX(0.9698);">Benutzer</span>
<span class="t" style="left:313.30px;top:97.19px;font-size:11px;color:#3c3c3c;transform:scaleX(0.9811);">Datenaustausch</span>
<span class="t" style="left:430.50px;top:55.19px;font-size:11px;color:#3c3c3c;transform:scaleX(0.9904);">Datenübernahme</span>
<span class="t" style="left:430.50px;top:76.19px;font-size:11px;color:#3c3c3c;transform:scaleX(0.9899);">Dokumente</span>
<span class="t" style="left:430.50px;top:97.19px;font-size:11px;color:#3c3c3c;transform:scaleX(0.9719);">Rechnungswesen</span>
<span class="t" style="left:545.80px;top:55.19px;font-size:11px;color:#3c3c3c;transform:scaleX(1.0265);">Voreinstellungen</span>
<span class="t" style="left:708.30px;top:55.19px;font-size:11px;color:#3c3c3c;transform:scaleX(0.9901);">Position speichern</span>
<span class="t" style="left:708.30px;top:76.19px;font-size:11px;color:#3c3c3c;transform:scaleX(0.9917);">Wiedervorlage erstellen</span>
<span class="t" style="left:871.40px;top:55.19px;font-size:11px;color:#3c3c3c;transform:scaleX(0.9849);">Anschreiben erstellen</span>
<span class="t" style="left:708.30px;top:97.19px;font-size:11px;color:#a7a7a7;transform:scaleX(1.0029);">Begehungsbericht erstellen</span>
<span class="t" style="left:992.70px;top:86.19px;font-size:11px;color:#a7a7a7;transform:scaleX(0.9547);">Speichern</span>
<span class="t" style="left:1054.50px;top:86.19px;font-size:11px;color:#3c3c3c;transform:scaleX(0.9571);">Stammdaten</span>
<span class="t" style="left:1122.40px;top:86.19px;font-size:11px;color:#3c3c3c;transform:scaleX(1.0122);">Impfbuch</span>
<span class="t" style="left:1176.00px;top:86.19px;font-size:11px;color:#3c3c3c;transform:scaleX(0.9273);">Ar</span>
<span class="t" style="left:307.50px;top:115.89px;font-size:11px;color:#5b6a88;transform:scaleX(1.0200);">Module</span>
<span class="t" style="left:643.70px;top:115.89px;font-size:11px;color:#5b6a88;transform:scaleX(0.9273);">Suchen</span>
<span class="t" style="left:813.20px;top:115.89px;font-size:11px;color:#5b6a88;transform:scaleX(1.0301);">Aktionen</span>
<span class="t" style="left:992.70px;top:115.89px;font-size:11px;color:#5b6a88;transform:scaleX(0.9547);">Speichern</span>
<span class="t" style="left:1118.40px;top:115.89px;font-size:11px;color:#5b6a88;transform:scaleX(0.9809);">Proband</span>
<span class="t" style="left:55.10px;top:165.99px;font-size:11px;color:#000;transform:scaleX(1.0126);">Dauerhafte medizinische</span>
<span class="t" style="left:55.50px;top:186.19px;font-size:11px;color:#000;">25 May 2013</span>
<span class="t" style="left:55.50px;top:200.89px;font-size:11px;color:#000;transform:scaleX(0.9254);">G 28(EU)</span>
<span class="t" style="left:89.20px;top:220.79px;font-size:11px;color:#000;transform:scaleX(0.9806);">Befund</span>
<span class="t" style="left:89.20px;top:239.69px;font-size:11px;color:#000;transform:scaleX(1.0170);">Beurteilung</span>
<span class="t" style="left:89.20px;top:258.79px;font-size:11px;color:#000;transform:scaleX(0.9234);">Lärm1</span>
<span class="t" style="left:72.50px;top:277.89px;font-size:11px;color:#000;transform:scaleX(1.0120);">GDT-Schnittstellen</span>
<span class="t" style="left:384.90px;top:169.53px;font-size:17.8px;color:#000;transform:scaleX(0.9587);">Links</span>
<span class="t" style="left:929.40px;top:169.53px;font-size:17.8px;color:#000;transform:scaleX(0.9631);">Rechts</span>
<span class="t" style="left:191.80px;top:216.48px;font-size:9px;color:#000;transform:scaleX(0.9165);">-10 dB(A)</span>
<span class="t" style="left:191.80px;top:235.48px;font-size:9px;color:#000;transform:scaleX(0.8881);">0 dB(A)</span>
<span class="t" style="left:191.80px;top:254.48px;font-size:9px;color:#000;transform:scaleX(0.8894);">10 dB(A)</span>
<span class="t" style="left:191.80px;top:273.48px;font-size:9px;color:#000;transform:scaleX(0.8894);">20 dB(A)</span>
<span class="t" style="left:191.80px;top:292.48px;font-size:9px;color:#000;transform:scaleX(0.8894);">30 dB(A)</span>
<span class="t" style="left:191.80px;top:311.48px;font-size:9px;color:#000;transform:scaleX(0.8894);">40 dB(A)</span>
<span class="t" style="left:191.80px;top:330.48px;font-size:9px;color:#000;transform:scaleX(0.8894);">50 dB(A)</span>
<span class="t" style="left:191.80px;top:349.48px;font-size:9px;color:#000;transform:scaleX(0.8894);">60 dB(A)</span>
<span class="t" style="left:191.80px;top:368.48px;font-size:9px;color:#000;transform:scaleX(0.8894);">70 dB(A)</span>
<span class="t" style="left:191.80px;top:387.48px;font-size:9px;color:#000;transform:scaleX(0.8894);">80 dB(A)</span>
<span class="t" style="left:191.80px;top:406.48px;font-size:9px;color:#000;transform:scaleX(0.8894);">90 dB(A)</span>
<span class="t" style="left:258.00px;top:449.08px;font-size:9px;color:#000;transform:scaleX(0.8549);">0.5</span>
<span class="t" style="left:324.30px;top:449.08px;font-size:9px;color:#000;">1</span>
<span class="t" style="left:390.50px;top:449.08px;font-size:9px;color:#000;">2</span>
<span class="t" style="left:429.20px;top:449.08px;font-size:9px;color:#000;">3</span>
<span class="t" style="left:456.80px;top:449.08px;font-size:9px;color:#000;">4</span>
<span class="t" style="left:495.60px;top:449.08px;font-size:9px;color:#000;">6</span>
<span class="t" style="left:523.20px;top:449.08px;font-size:9px;color:#000;transform:scaleX(0.8907);">8 kHz</span>
<span class="t" style="left:200.25px;top:486.59px;font-size:11px;color:#999;transform:scaleX(0.9786);">0.5 kHz</span>
<span class="t" style="left:266.75px;top:486.59px;font-size:11px;color:#111;transform:scaleX(0.9778);">1 kHz</span>
<span class="t" style="left:328.75px;top:486.59px;font-size:11px;color:#111;transform:scaleX(0.9778);">2 kHz</span>
<span class="t" style="left:390.75px;top:486.59px;font-size:11px;color:#111;transform:scaleX(0.9778);">3 kHz</span>
<span class="t" style="left:452.75px;top:486.59px;font-size:11px;color:#111;transform:scaleX(0.9778);">4 kHz</span>
<span class="t" style="left:514.75px;top:486.59px;font-size:11px;color:#111;transform:scaleX(0.9778);">6 kHz</span>
<span class="t" style="left:576.75px;top:486.59px;font-size:11px;color:#999;transform:scaleX(0.9778);">8 kHz</span>
<span class="t" style="left:271.60px;top:508.69px;font-size:11px;color:#111;transform:scaleX(0.9714);">41</span>
<span class="t" style="left:333.60px;top:508.69px;font-size:11px;color:#111;transform:scaleX(0.9714);">40</span>
<span class="t" style="left:395.60px;top:508.69px;font-size:11px;color:#111;transform:scaleX(0.9714);">30</span>
<span class="t" style="left:457.60px;top:508.69px;font-size:11px;color:#111;transform:scaleX(0.9714);">40</span>
<span class="t" style="left:519.60px;top:508.69px;font-size:11px;color:#111;transform:scaleX(0.9714);">32</span>
<span class="t" style="left:271.60px;top:531.69px;font-size:11px;color:#9a9a9a;transform:scaleX(0.9714);">20</span>
<span class="t" style="left:333.60px;top:531.69px;font-size:11px;color:#9a9a9a;transform:scaleX(0.9714);">25</span>
<span class="t" style="left:395.60px;top:531.69px;font-size:11px;color:#9a9a9a;transform:scaleX(0.9714);">40</span>
<span class="t" style="left:457.60px;top:531.69px;font-size:11px;color:#9a9a9a;transform:scaleX(0.9714);">40</span>
<span class="t" style="left:519.60px;top:531.69px;font-size:11px;color:#9a9a9a;transform:scaleX(0.9714);">40</span>
<span class="t" style="left:209.60px;top:553.29px;font-size:11px;color:#111;transform:scaleX(0.9714);">50</span>
<span class="t" style="left:271.60px;top:553.29px;font-size:11px;color:#111;transform:scaleX(0.9714);">50</span>
<span class="t" style="left:333.60px;top:553.29px;font-size:11px;color:#111;transform:scaleX(0.9714);">55</span>
<span class="t" style="left:395.60px;top:553.29px;font-size:11px;color:#111;transform:scaleX(0.9714);">57</span>
<span class="t" style="left:457.60px;top:553.29px;font-size:11px;color:#111;transform:scaleX(0.9714);">59</span>
<span class="t" style="left:519.60px;top:553.29px;font-size:11px;color:#111;transform:scaleX(0.9714);">59</span>
<span class="t" style="left:581.60px;top:553.29px;font-size:11px;color:#111;transform:scaleX(0.9714);">54</span>
<span class="t" style="left:743.30px;top:216.48px;font-size:9px;color:#000;transform:scaleX(0.9165);">-10 dB(A)</span>
<span class="t" style="left:743.30px;top:235.48px;font-size:9px;color:#000;transform:scaleX(0.8881);">0 dB(A)</span>
<span class="t" style="left:743.30px;top:254.48px;font-size:9px;color:#000;transform:scaleX(0.8894);">10 dB(A)</span>
<span class="t" style="left:743.30px;top:273.48px;font-size:9px;color:#000;transform:scaleX(0.8894);">20 dB(A)</span>
<span class="t" style="left:743.30px;top:292.48px;font-size:9px;color:#000;transform:scaleX(0.8894);">30 dB(A)</span>
<span class="t" style="left:743.30px;top:311.48px;font-size:9px;color:#000;transform:scaleX(0.8894);">40 dB(A)</span>
<span class="t" style="left:743.30px;top:330.48px;font-size:9px;color:#000;transform:scaleX(0.8894);">50 dB(A)</span>
<span class="t" style="left:743.30px;top:349.48px;font-size:9px;color:#000;transform:scaleX(0.8894);">60 dB(A)</span>
<span class="t" style="left:743.30px;top:368.48px;font-size:9px;color:#000;transform:scaleX(0.8894);">70 dB(A)</span>
<span class="t" style="left:743.30px;top:387.48px;font-size:9px;color:#000;transform:scaleX(0.8894);">80 dB(A)</span>
<span class="t" style="left:743.30px;top:406.48px;font-size:9px;color:#000;transform:scaleX(0.8894);">90 dB(A)</span>
<span class="t" style="left:809.50px;top:449.08px;font-size:9px;color:#000;transform:scaleX(0.8549);">0.5</span>
<span class="t" style="left:875.80px;top:449.08px;font-size:9px;color:#000;">1</span>
<span class="t" style="left:942.00px;top:449.08px;font-size:9px;color:#000;">2</span>
<span class="t" style="left:980.70px;top:449.08px;font-size:9px;color:#000;">3</span>
<span class="t" style="left:1008.30px;top:449.08px;font-size:9px;color:#000;">4</span>
<span class="t" style="left:1047.10px;top:449.08px;font-size:9px;color:#000;">6</span>
<span class="t" style="left:1074.70px;top:449.08px;font-size:9px;color:#000;transform:scaleX(0.8907);">8 kHz</span>
<span class="t" style="left:751.75px;top:486.59px;font-size:11px;color:#999;transform:scaleX(0.9786);">0.5 kHz</span>
<span class="t" style="left:818.25px;top:486.59px;font-size:11px;color:#111;transform:scaleX(0.9778);">1 kHz</span>
<span class="t" style="left:880.25px;top:486.59px;font-size:11px;color:#111;transform:scaleX(0.9778);">2 kHz</span>
<span class="t" style="left:942.25px;top:486.59px;font-size:11px;color:#111;transform:scaleX(0.9778);">3 kHz</span>
<span class="t" style="left:1004.25px;top:486.59px;font-size:11px;color:#111;transform:scaleX(0.9778);">4 kHz</span>
<span class="t" style="left:1066.25px;top:486.59px;font-size:11px;color:#111;transform:scaleX(0.9778);">6 kHz</span>
<span class="t" style="left:1128.25px;top:486.59px;font-size:11px;color:#999;transform:scaleX(0.9778);">8 kHz</span>
<span class="t" style="left:823.10px;top:508.69px;font-size:11px;color:#111;transform:scaleX(0.9714);">19</span>
<span class="t" style="left:885.10px;top:508.69px;font-size:11px;color:#111;transform:scaleX(0.9714);">22</span>
<span class="t" style="left:947.10px;top:508.69px;font-size:11px;color:#111;transform:scaleX(0.9714);">22</span>
<span class="t" style="left:1009.10px;top:508.69px;font-size:11px;color:#111;transform:scaleX(0.9714);">29</span>
<span class="t" style="left:1071.10px;top:508.69px;font-size:11px;color:#111;transform:scaleX(0.9714);">33</span>
<span class="t" style="left:823.10px;top:531.69px;font-size:11px;color:#9a9a9a;transform:scaleX(0.9714);">20</span>
<span class="t" style="left:885.10px;top:531.69px;font-size:11px;color:#9a9a9a;transform:scaleX(0.9714);">25</span>
<span class="t" style="left:947.10px;top:531.69px;font-size:11px;color:#9a9a9a;transform:scaleX(0.9714);">40</span>
<span class="t" style="left:1009.10px;top:531.69px;font-size:11px;color:#9a9a9a;transform:scaleX(0.9714);">40</span>
<span class="t" style="left:1071.10px;top:531.69px;font-size:11px;color:#9a9a9a;transform:scaleX(0.9714);">40</span>
<span class="t" style="left:761.10px;top:553.29px;font-size:11px;color:#111;transform:scaleX(0.9714);">35</span>
<span class="t" style="left:823.10px;top:553.29px;font-size:11px;color:#111;transform:scaleX(0.9714);">37</span>
<span class="t" style="left:885.10px;top:553.29px;font-size:11px;color:#111;transform:scaleX(0.9714);">35</span>
<span class="t" style="left:947.10px;top:553.29px;font-size:11px;color:#111;transform:scaleX(0.9714);">39</span>
<span class="t" style="left:1009.10px;top:553.29px;font-size:11px;color:#111;transform:scaleX(0.9714);">42</span>
<span class="t" style="left:1071.10px;top:553.29px;font-size:11px;color:#111;transform:scaleX(0.9714);">47</span>
<span class="t" style="left:1133.10px;top:553.29px;font-size:11px;color:#111;transform:scaleX(0.9714);">47</span>
<span class="t" style="left:635.40px;top:508.69px;font-size:11px;color:#000;transform:scaleX(0.9706);">Lärm I (dB)</span>
<span class="t" style="left:635.40px;top:531.69px;font-size:11px;color:#000;transform:scaleX(1.0177);">Normwerte (dB)</span>
<span class="t" style="left:635.40px;top:553.29px;font-size:11px;color:#000;transform:scaleX(0.9659);">Lärm II (dB)</span>
<span class="t" style="left:207.00px;top:589.09px;font-size:11px;color:#1c1c1c;transform:scaleX(1.0343);">Untersuchungsprofil</span>
<span class="t" style="left:20.00px;top:611.98px;font-size:11.3px;color:#0c0c0c;transform:scaleX(0.9556);">opella://proband/Arztmaske/2ecb58c4-09ff-4788-8db9-32d7344527ec</span>
</div>
</body></html>
